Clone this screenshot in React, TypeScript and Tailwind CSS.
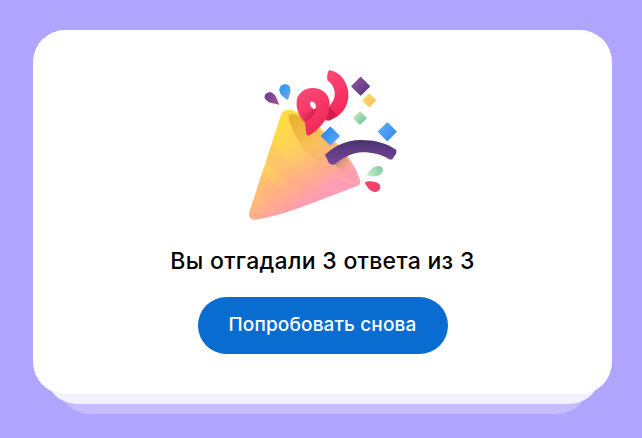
export default function App() {
  return (
    <div className="h-[438px] w-[642px] overflow-hidden bg-[#afa5fe] pt-[30px] font-['Inter',sans-serif]">
      <div className="relative z-20 ml-[33px] flex h-[364px] w-[579px] flex-col items-center rounded-[32px] bg-white pt-[30px]">
        <Popper />
        <h1 className="mt-[15px] text-[23px] leading-[32px] font-medium tracking-[0.3px] text-black">Вы отгадали 3 ответа из 3</h1>
        <button className="mt-[20px] h-[57px] w-[250px] rounded-full bg-[#096cd0] text-[19px] font-medium tracking-[0.15px] text-white">Попробовать снова</button>
      </div>
      <div className="relative z-10 ml-[45px] -mt-[32px] h-[42px] w-[556px] rounded-b-[32px] bg-[#f3f1ff]" />
      <div className="ml-[58px] -mt-[32px] h-[42px] w-[531px] rounded-b-[32px] bg-[#c5bdff]" />
    </div>
  );
}

function Diamond({ x, y, r, fill }: { x: number; y: number; r: number; fill: string }) {
  return (
    <path
      d={`M${x - r} ${y}L${x} ${y - r}L${x + r} ${y}L${x} ${y + r}Z`}
      fill={fill}
      stroke={fill}
      strokeWidth="6"
      strokeLinejoin="round"
    />
  );
}

const CONE = "M152 168C158 148 178 146 194 154C270 192 368 282 390 360C392 370 388 376 380 379C280 415 170 465 88 477C68 484 54 474 58 456Z";

function Popper() {
  return (
    <svg viewBox="0 0 540 510" className="mr-[5px] h-[170px] w-[180px] shrink-0">
      <defs>
        <linearGradient id="cone" x1="130" y1="210" x2="270" y2="400" gradientUnits="userSpaceOnUse">
          <stop offset="0" stopColor="#ffdc42" />
          <stop offset="0.4" stopColor="#ffcd62" />
          <stop offset="0.72" stopColor="#ffaf88" />
          <stop offset="1" stopColor="#ff9db5" />
        </linearGradient>
        <linearGradient id="mouth" x1="190" y1="165" x2="340" y2="350" gradientUnits="userSpaceOnUse">
          <stop offset="0" stopColor="#e9b02c" />
          <stop offset="0.45" stopColor="#fbc05c" />
          <stop offset="1" stopColor="#ff9db0" />
        </linearGradient>
        <linearGradient id="pink" x1="220" y1="60" x2="330" y2="210" gradientUnits="userSpaceOnUse">
          <stop offset="0" stopColor="#ff4f78" />
          <stop offset="1" stopColor="#ee1d52" />
        </linearGradient>
        <linearGradient id="purple" x1="390" y1="240" x2="390" y2="310" gradientUnits="userSpaceOnUse">
          <stop offset="0" stopColor="#463271" />
          <stop offset="1" stopColor="#7c4596" />
        </linearGradient>
        <linearGradient id="shade" x1="300" y1="295" x2="350" y2="345" gradientUnits="userSpaceOnUse">
          <stop offset="0" stopColor="#6f5a5a" stopOpacity="0.85" />
          <stop offset="1" stopColor="#f9b06f" stopOpacity="0" />
        </linearGradient>
        <linearGradient id="blue" x1="280" y1="205" x2="325" y2="250" gradientUnits="userSpaceOnUse">
          <stop offset="0" stopColor="#2c86e8" />
          <stop offset="1" stopColor="#5aa8fb" />
        </linearGradient>
        <linearGradient id="blue2" x1="450" y1="195" x2="498" y2="240" gradientUnits="userSpaceOnUse">
          <stop offset="0" stopColor="#5aa8fb" />
          <stop offset="1" stopColor="#3389ec" />
        </linearGradient>
        <linearGradient id="violet" x1="370" y1="60" x2="415" y2="100" gradientUnits="userSpaceOnUse">
          <stop offset="0" stopColor="#8b4c9e" />
          <stop offset="1" stopColor="#5c3a80" />
        </linearGradient>
        <linearGradient id="yellow" x1="400" y1="105" x2="436" y2="140" gradientUnits="userSpaceOnUse">
          <stop offset="0" stopColor="#ffdf4e" />
          <stop offset="1" stopColor="#ffb870" />
        </linearGradient>
        <linearGradient id="mint" x1="372" y1="155" x2="410" y2="195" gradientUnits="userSpaceOnUse">
          <stop offset="0" stopColor="#c9eeba" />
          <stop offset="1" stopColor="#68b99f" />
        </linearGradient>
        <linearGradient id="drop1" x1="105" y1="110" x2="148" y2="125" gradientUnits="userSpaceOnUse">
          <stop offset="0" stopColor="#6e3f8f" />
          <stop offset="1" stopColor="#a84fa0" />
        </linearGradient>
        <linearGradient id="drop2" x1="150" y1="85" x2="182" y2="105" gradientUnits="userSpaceOnUse">
          <stop offset="0" stopColor="#2f9bf2" />
          <stop offset="1" stopColor="#6f9ff0" />
        </linearGradient>
        <linearGradient id="drop3" x1="412" y1="345" x2="460" y2="325" gradientUnits="userSpaceOnUse">
          <stop offset="0" stopColor="#c6efc0" />
          <stop offset="1" stopColor="#7dcaa4" />
        </linearGradient>
        <linearGradient id="fold9" x1="215" y1="150" x2="262" y2="180" gradientUnits="userSpaceOnUse">
          <stop offset="0" stopColor="#f03a66" />
          <stop offset="1" stopColor="#c21d49" />
        </linearGradient>
        <clipPath id="coneClip">
          <path d={CONE} />
        </clipPath>
      </defs>

      <path d={CONE} fill="url(#cone)" />
      <g clipPath="url(#coneClip)">
        <path d="M126 255C170 290 210 340 262 388L218 420C180 380 150 340 108 310Z" fill="#ff9f8c" opacity="0.2" />
        <path d="M96 335C130 365 170 410 212 448L150 470C130 440 110 415 78 392Z" fill="#ff9f8c" opacity="0.2" />
      </g>
      <path d="M176 176C172 158 192 158 212 170C280 208 352 284 384 352C389 366 384 372 372 368C290 352 200 270 176 176Z" fill="url(#mouth)" stroke="#ffc77a" strokeOpacity="0.6" strokeWidth="2" />

      <path d="M292 290L345 270L366 350C340 338 318 318 292 290Z" fill="url(#shade)" />
      <path d="M285 284C318 255 350 241 392 240C435 240 470 250 496 268C501 272 500 277 497 283L488 296C484 300 480 299 475 296C455 284 428 277 398 277C368 278 340 292 315 313C309 316 302 314 297 309Z" fill="url(#purple)" />

      <Diamond x={301} y={228} r={25} fill="url(#blue)" />

      <path d="M298 30C340 38 358 80 355 112C352 140 338 160 318 172C308 178 298 182 288 182L296 140C312 125 318 105 312 88C307 72 300 66 293 62C290 50 292 36 298 30Z" fill="url(#pink)" />
      <path d="M297 140L322 166L298 182L285 178Z" fill="#cf1c4a" />
      <path d="M200 125C200 100 225 82 252 84C280 86 298 105 299 130C299 155 292 178 270 200C258 212 248 222 236 226C232 227 230 224 229 220L225 188C210 172 198 150 200 125Z" fill="url(#pink)" />
      <path d="M214 154C225 162 238 160 246 150L258 146C258 160 244 176 227 185C220 176 217 165 214 154Z" fill="url(#fold9)" />
      <path d="M240 128C244 122 252 124 256 132C259 140 258 146 253 147C246 146 238 136 240 128Z" fill="#ffffff" />

      <Diamond x={392} y={79} r={25} fill="url(#violet)" />
      <Diamond x={418} y={121} r={17} fill="url(#yellow)" />
      <Diamond x={390} y={174} r={17} fill="url(#mint)" />
      <Diamond x={472} y={215} r={25} fill="url(#blue2)" />

      <path d="M148 134C130 131 110 128 104 114C102 102 114 94 126 98C138 104 142 120 148 134Z" fill="url(#drop1)" />
      <path d="M174 120C162 114 148 104 148 88C150 74 168 68 178 78C186 90 178 106 174 120Z" fill="url(#drop2)" />
      <path d="M410 346C418 330 432 317 448 318C460 320 463 334 452 342C440 352 424 350 410 346Z" fill="url(#drop3)" />
      <path d="M404 367C414 362 436 362 448 372C456 384 446 398 432 396C418 392 410 380 404 367Z" fill="#f73f6e" />
    </svg>
  );
}
